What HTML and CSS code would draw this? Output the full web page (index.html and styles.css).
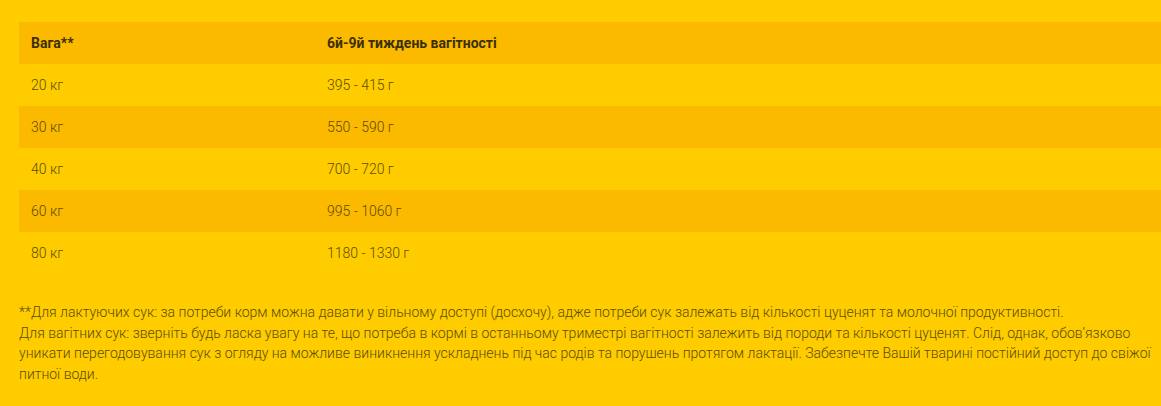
FILE: index.html
```html
<!DOCTYPE html>
<html lang="uk">
<head>
<meta charset="utf-8">
<link rel="stylesheet" href="styles.css">
</head>
<body>
<div class="page">
  <table class="feed">
    <thead>
      <tr><th class="c1">Вага**</th><th>6й-9й тиждень вагітності</th></tr>
    </thead>
    <tbody>
      <tr><td class="c1">20 кг</td><td>395 - 415 г</td></tr>
      <tr><td class="c1">30 кг</td><td>550 - 590 г</td></tr>
      <tr><td class="c1">40 кг</td><td>700 - 720 г</td></tr>
      <tr><td class="c1">60 кг</td><td>995 - 1060 г</td></tr>
      <tr><td class="c1">80 кг</td><td>1180 - 1330 г</td></tr>
    </tbody>
  </table>
  <p class="note">**Для лактуючих сук: за потреби корм можна давати у вільному доступі (досхочу), адже потреби сук залежать від кількості цуценят та молочної продуктивності.<br>Для вагітних сук: зверніть будь ласка увагу на те, що потреба в кормі в останньому триместрі вагітності залежить від породи та кількості цуценят. Слід, однак, обов’язково уникати перегодовування сук з огляду на можливе виникнення ускладнень під час родів та порушень протягом лактації. Забезпечте Вашій тварині постійний доступ до свіжої питної води.</p>
</div>
</body>
</html>
```
FILE: styles.css
```css
html, body {
  margin: 0;
  padding: 0;
  background: #ffcc00;
}
body {
  font-family: Roboto, "Liberation Sans", sans-serif;
  width: 1161px;
  height: 406px;
  overflow: hidden;
}
.page {
  padding: 22px 0 0 19px;
}
.feed {
  border-collapse: collapse;
  width: 1142px;
  font-size: 14px;
}
.feed th, .feed td {
  height: 42px;
  padding: 0 12px;
  text-align: left;
  vertical-align: middle;
  box-sizing: border-box;
}
.feed .c1 {
  width: 296px;
}
.feed th {
  font-weight: 700;
  color: #3b3000;
  background: #fbb900;
}
.feed td {
  font-weight: 300;
  color: #5e4c00;
}
.feed tbody tr:nth-child(even) {
  background: #fbb900;
}
.note {
  margin: 28px 0 0 0;
  font-size: 14px;
  line-height: 20.5px;
  font-weight: 300;
  color: #5e4c00;
  padding-right: 10px;
}
```
